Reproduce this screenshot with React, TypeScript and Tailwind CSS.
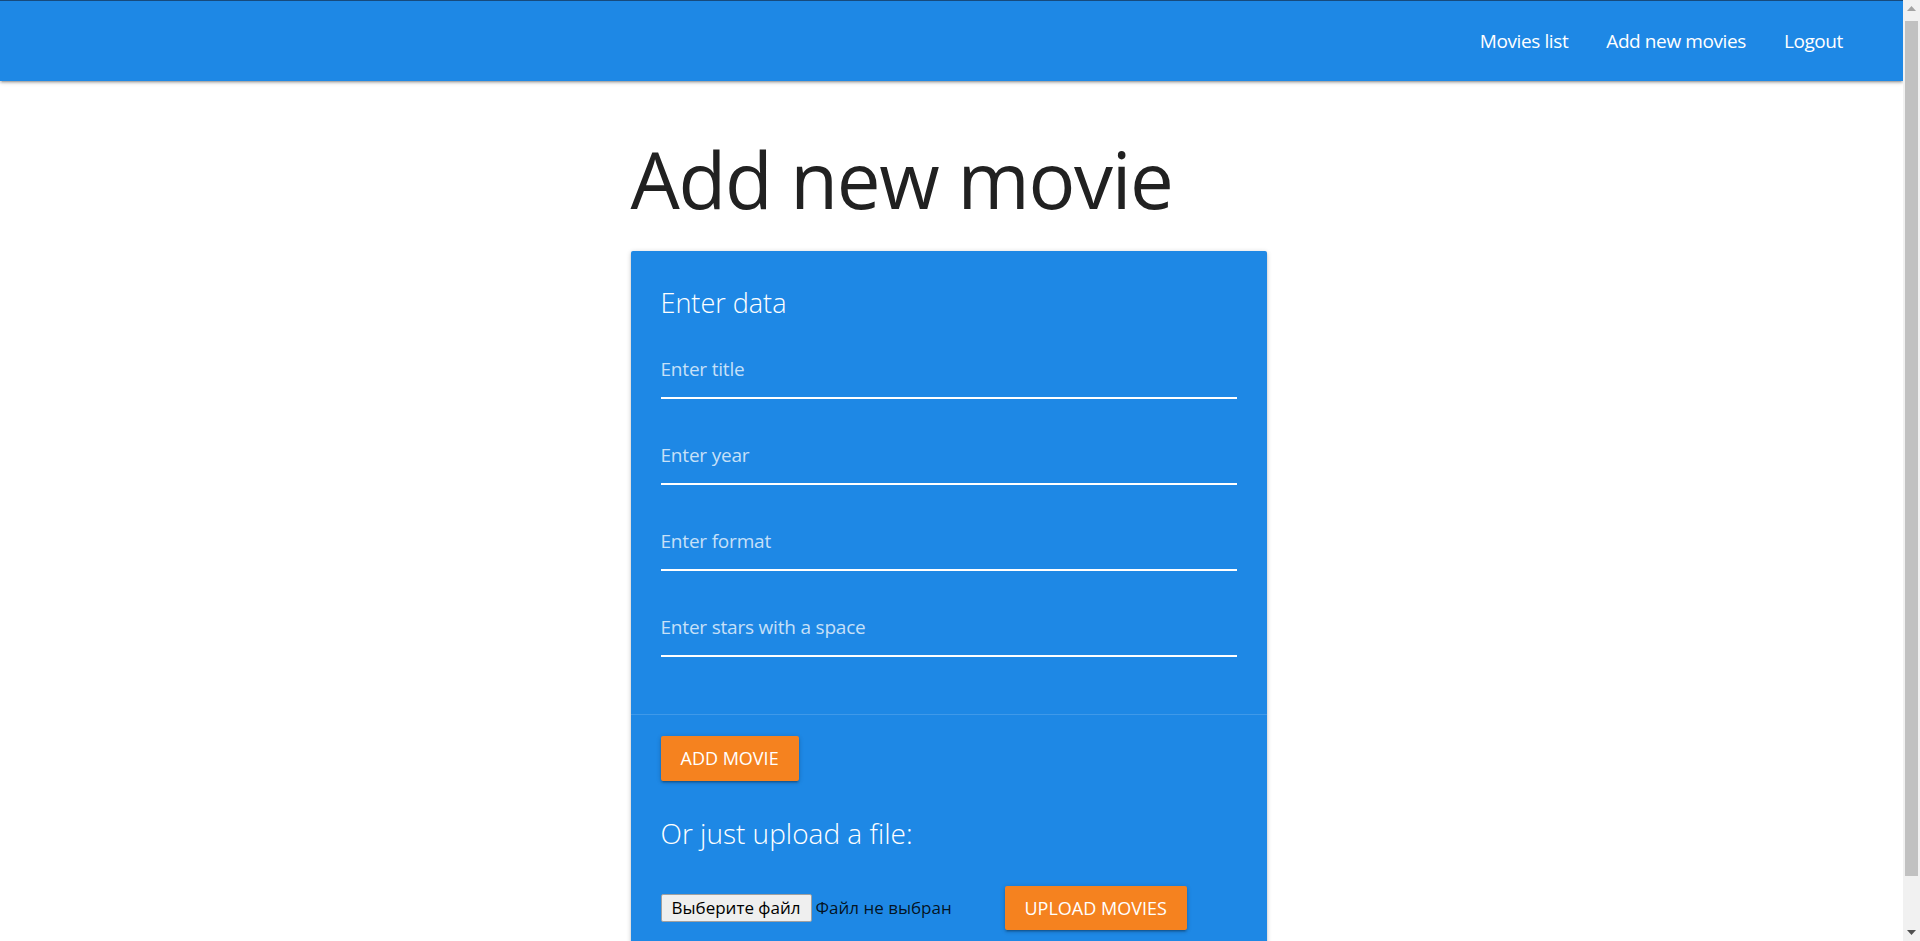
import React from 'react';

const navLinks = ['Movies list', 'Add new movies', 'Logout'];
const fields = ['Enter title', 'Enter year', 'Enter format', 'Enter stars with a space'];

const zDepth =
  'shadow-[0_2px_2px_0_rgba(0,0,0,0.14),0_3px_1px_-2px_rgba(0,0,0,0.12),0_1px_5px_0_rgba(0,0,0,0.2)]';

function Scrollbar() {
  return (
    <aside className="sticky top-0 flex h-screen w-[17px] shrink-0 flex-col bg-[#f1f1f1]">
      <div className="flex h-[17px] items-center justify-center">
        <svg width="9" height="5" viewBox="0 0 9 5">
          <polygon points="0,5 4.5,0 9,5" fill="#a3a3a3" />
        </svg>
      </div>
      <div className="flex-1 px-[2px] pt-[4px]">
        <div className="h-[855px] bg-[#c1c1c1]" />
      </div>
      <div className="flex h-[17px] items-center justify-center">
        <svg width="9" height="5" viewBox="0 0 9 5">
          <polygon points="0,0 9,0 4.5,5" fill="#505050" />
        </svg>
      </div>
    </aside>
  );
}

export default function App() {
  return (
    <div className="flex min-h-screen bg-white font-['Open_Sans','Noto_Sans',sans-serif] text-[#212121]">
      <div className="min-w-0 flex-1">
        <nav className={`flex h-[81px] items-center justify-end border-t border-[#174a7c] bg-[#1e88e5] pr-[41px] ${zDepth}`}>
          {navLinks.map((link) => (
            <a key={link} href="#" className="px-[19px] text-[19px] tracking-[-0.4px] text-white">
              {link}
            </a>
          ))}
        </nav>

        <main className="mx-auto w-[642px] pr-[6px] pb-[20px]">
          <h1 className="mt-[54px] mb-[28px] text-[78px] leading-[88px] font-normal tracking-[-1.3px]">
            Add new movie
          </h1>

          <div className={`rounded-[2px] bg-[#1e88e5] ${zDepth}`}>
            <div className="px-[30px] pt-[30px] pb-[57px]">
              <h2 className="mt-[2px] text-[27px] leading-[40px] font-light text-white">Enter data</h2>
              <div className="mt-[16px] flex flex-col gap-[26px]">
                {fields.map((f) => (
                  <input
                    key={f}
                    type="text"
                    placeholder={f}
                    className="h-[60px] w-full border-b-2 border-white bg-transparent pt-[1px] text-[19px] tracking-[-0.2px] text-white outline-none placeholder:text-white/75"
                  />
                ))}
              </div>
            </div>

            <div className="border-t border-white/15 px-[30px] pt-[21px] pb-[45px]">
              <button className={`h-[45px] rounded-[2px] bg-[#f5821f] px-[20px] text-[18px] text-white uppercase ${zDepth}`}>
                Add movie
              </button>
              <h3 className="mt-[32px] text-[28px] leading-[40px] font-light text-white">Or just upload a file:</h3>
              <div className="mt-[33px] flex items-center">
                <div className="flex w-[344px] items-center text-[17px]">
                  <span className="flex h-[28px] items-center rounded-[2px] border border-[#a0a0a0] bg-[#efefef] px-[10px] text-black">
                    Выберите файл
                  </span>
                  <span className="ml-[4px] text-black/87">Файл не выбран</span>
                </div>
                <button className={`h-[44px] rounded-[2px] bg-[#f5821f] px-[20px] text-[18px] text-white uppercase ${zDepth}`}>
                  Upload movies
                </button>
              </div>
            </div>
          </div>
        </main>
      </div>
      <Scrollbar />
    </div>
  );
}
